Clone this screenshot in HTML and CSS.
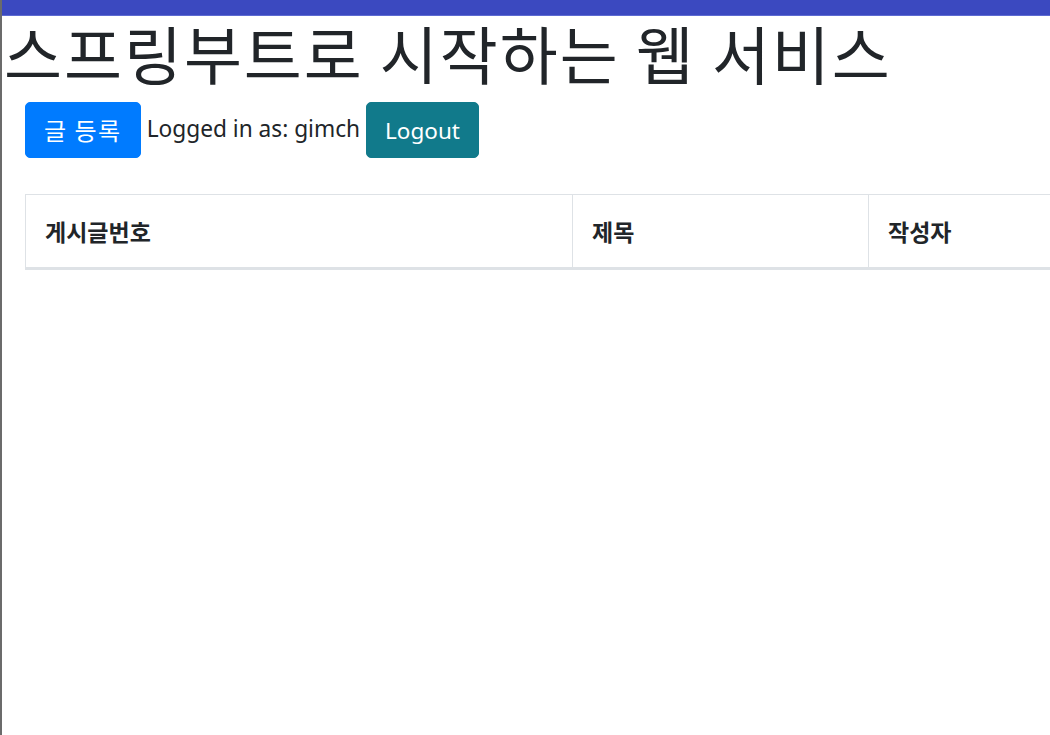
FILE: index.html
```html
<!DOCTYPE html>
<html>
<head>
<meta charset="utf-8">
<link rel="stylesheet" href="styles.css">
</head>
<body>
  <div id="topbar"></div>
  <h1 class="title">스프링부트로 시작하는 웹 서비스</h1>
  <div class="container">
    <div class="actions">
      <a href="#" class="btn btn-primary">글 등록</a>
      <span class="user">Logged in as: <span id="user">gimch</span></span>
      <a href="#" class="btn btn-info">Logout</a>
    </div>
    <div class="table-wrap">
      <table class="posts">
        <thead>
          <tr>
            <th class="col-id">게시글번호</th>
            <th class="col-title">제목</th>
            <th class="col-author">작성자</th>
          </tr>
        </thead>
        <tbody id="tbody"></tbody>
      </table>
    </div>
  </div>
</body>
</html>
```

FILE: styles.css
```css
html, body {
  margin: 0;
  height: 100%;
}
body {
  border-left: 2px solid #6b6b6b;
  font-family: "Noto Sans", "Noto Sans CJK KR", sans-serif;
  font-size: 24px;
  line-height: 36px;
  color: #212529;
  background: #fff;
  overflow: hidden;
}
#topbar {
  height: 15px;
  background-color: #3b49c0;
  border-bottom: 1px solid #5d6bd2;
}
.title {
  font-family: "Noto Sans CJK KR", sans-serif;
  font-size: 63px;
  font-weight: 400;
  letter-spacing: 2px;
  line-height: 72px;
  margin: 0 0 14px 0;
  padding-left: 2px;
  white-space: nowrap;
}
.container {
  padding-left: 23px;
}
.actions {
  display: flex;
  align-items: center;
  gap: 6px;
  white-space: nowrap;
}
.user {
  font-size: 22.7px;
  margin-top: -2px;
}
.btn {
  display: block;
  height: 54px;
  box-sizing: content-box;
  padding: 0 18px;
  font-size: 24px;
  line-height: 56px;
  border: 1px solid transparent;
  border-radius: 5px;
  color: #fff;
  text-decoration: none;
  font-family: "Noto Sans CJK KR", "Noto Sans", sans-serif;
}
.btn-primary {
  background-color: #007bff;
  border-color: #007bff;
  letter-spacing: 1.5px;
  line-height: 54px;
}
.btn-info {
  background-color: #117a8b;
  border-color: #117a8b;
  font-family: "Noto Sans", sans-serif;
  font-size: 22.5px;
}
.table-wrap {
  margin-top: 36px;
  overflow: hidden;
}
.posts {
  border-collapse: collapse;
  table-layout: fixed;
  width: 1100px;
}
.posts th {
  font-family: "Noto Sans CJK KR", sans-serif;
  font-size: 23px;
  font-weight: bold;
  text-align: left;
  padding: 18px 19px;
  line-height: 36px;
  border: 1px solid #dee2e6;
  border-bottom: 3px solid #dee2e6;
}
.col-id { width: 508px; }
.col-title { width: 257px; }
```
